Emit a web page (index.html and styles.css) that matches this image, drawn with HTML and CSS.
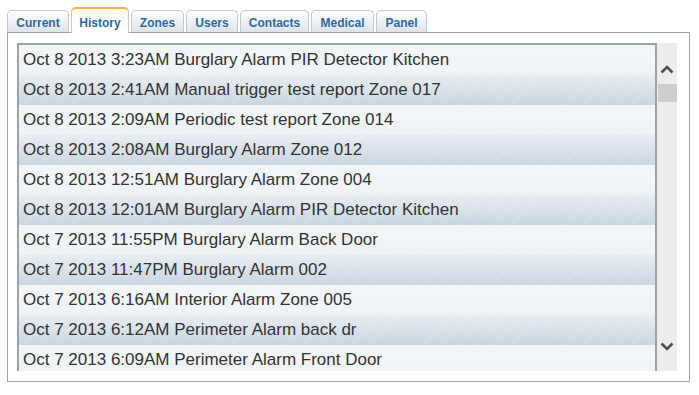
FILE: index.html
```html
<!DOCTYPE html>
<html>
<head>
<meta charset="utf-8">
<link rel="stylesheet" href="styles.css">
</head>
<body>
<div class="wrap">
  <div class="tabs">
    <div class="tab t-current">Current</div>
    <div class="tab active t-history">History</div>
    <div class="tab t-zones">Zones</div>
    <div class="tab t-users">Users</div>
    <div class="tab t-contacts">Contacts</div>
    <div class="tab t-medical">Medical</div>
    <div class="tab t-panel">Panel</div>
  </div>
  <div class="panel">
    <div class="listbox">
      <div class="list">
        <div class="row">Oct 8 2013 3:23AM Burglary Alarm PIR Detector Kitchen</div>
        <div class="row alt">Oct 8 2013 2:41AM Manual trigger test report Zone 017</div>
        <div class="row">Oct 8 2013 2:09AM Periodic test report Zone 014</div>
        <div class="row alt">Oct 8 2013 2:08AM Burglary Alarm Zone 012</div>
        <div class="row">Oct 8 2013 12:51AM Burglary Alarm Zone 004</div>
        <div class="row alt">Oct 8 2013 12:01AM Burglary Alarm PIR Detector Kitchen</div>
        <div class="row">Oct 7 2013 11:55PM Burglary Alarm Back Door</div>
        <div class="row alt">Oct 7 2013 11:47PM Burglary Alarm 002</div>
        <div class="row">Oct 7 2013 6:16AM Interior Alarm Zone 005</div>
        <div class="row alt">Oct 7 2013 6:12AM Perimeter Alarm back dr</div>
        <div class="row">Oct 7 2013 6:09AM Perimeter Alarm Front Door</div>
      </div>
      <div class="scrollbar">
        <svg class="arrow up" width="14" height="10" viewBox="0 0 14 10"><path d="M1.5 8.5 L7 3 L12.5 8.5" fill="none" stroke="#4f4f4f" stroke-width="2.6"/></svg>
        <div class="thumb"></div>
        <div class="track"></div>
        <svg class="arrow down" width="14" height="10" viewBox="0 0 14 10"><path d="M1.5 1.5 L7 7 L12.5 1.5" fill="none" stroke="#4f4f4f" stroke-width="2.6"/></svg>
      </div>
    </div>
  </div>
</div>
</body>
</html>
```
FILE: styles.css
```css
html, body {
  margin: 0;
  padding: 0;
  background: #ffffff;
}
.wrap {
  margin: 7px 0 0 7px;
  width: 683px;
  font-family: "Liberation Sans", Arial, sans-serif;
}
.tabs {
  display: flex;
  align-items: flex-end;
  height: 25px;
  padding-left: 0;
}
.tab {
  box-sizing: border-box;
  height: 22px;
  margin-right: 2px;
  padding: 5px 0 0 0;
  text-align: center;
  font-size: 12px;
  font-weight: bold;
  color: #2c6aa5;
  border: 1px solid #c3c9d1;
  border-bottom: none;
  border-radius: 5px 5px 0 0;
  background: linear-gradient(#ffffff 0%, #eef1f5 50%, #dde3ea 100%);
}
.tab.active {
  height: 26px;
  margin-bottom: -1px;
  padding-top: 7px;
  border-top: 2px solid #f0b446;
  background: linear-gradient(#fff3dc 0%, #ffffff 45%, #ffffff 100%);
  position: relative;
  z-index: 1;
}
.t-current { width: 62px; }
.t-history { width: 58px; }
.t-zones { width: 53px; }
.t-users { width: 52px; }
.t-contacts { width: 69px; }
.t-medical { width: 63px; }
.t-panel { width: 51px; }

.panel {
  border: 1px solid #a4a4a4;
  padding: 10px 12px 10px 9px;
  background: #ffffff;
}
.listbox {
  display: flex;
  height: 328px;
}
.list {
  flex: 1;
  border: 2px solid #98a3ac;
  border-bottom: none;
  overflow: hidden;
}
.row {
  height: 30px;
  line-height: 29px;
  padding-left: 4px;
  font-size: 17px;
  color: #333333;
  white-space: nowrap;
  background: linear-gradient(#f3f6f9, #eef3f6);
}
.row.alt {
  background:
    repeating-linear-gradient(135deg, rgba(255,255,255,0.18) 0px, rgba(255,255,255,0.18) 1px, rgba(255,255,255,0) 1px, rgba(255,255,255,0) 3px),
    linear-gradient(#e6ecf1 0%, #d7e0e8 50%, #c7d3de 100%);
}
.scrollbar {
  width: 20px;
  background: #ededed;
  display: flex;
  flex-direction: column;
  align-items: center;
}
.arrow {
  display: block;
}
.arrow.up {
  margin-top: 21px;
}
.thumb {
  width: 19px;
  height: 18px;
  margin-top: 10px;
  background: #cdcdcd;
}
.track {
  flex: 1;
}
.arrow.down {
  margin-bottom: 19px;
}
```
